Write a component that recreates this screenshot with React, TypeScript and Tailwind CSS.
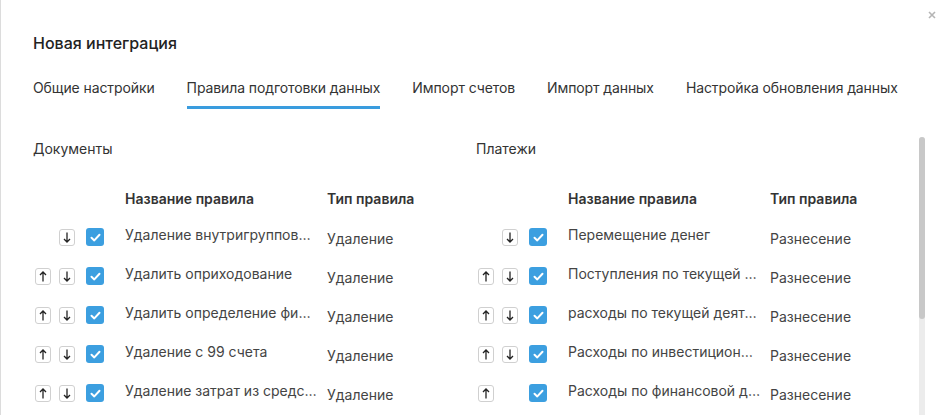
import React from "react";

type Rule = { name: string; type: string; up: boolean; down: boolean };

const DOC_RULES: Rule[] = [
  { name: "Удаление внутригрупповых документов", type: "Удаление", up: false, down: true },
  { name: "Удалить оприходование", type: "Удаление", up: true, down: true },
  { name: "Удалить определение финансового результата", type: "Удаление", up: true, down: true },
  { name: "Удаление с 99 счета", type: "Удаление", up: true, down: true },
  { name: "Удаление затрат из средств", type: "Удаление", up: true, down: true },
];

const PAY_RULES: Rule[] = [
  { name: "Перемещение денег", type: "Разнесение", up: false, down: true },
  { name: "Поступления по текущей деятельности", type: "Разнесение", up: true, down: true },
  { name: "расходы по текущей деятельности", type: "Разнесение", up: true, down: true },
  { name: "Расходы по инвестиционной деятельности", type: "Разнесение", up: true, down: true },
  { name: "Расходы по финансовой деятельности", type: "Разнесение", up: true, down: false },
];

const TABS = [
  "Общие настройки",
  "Правила подготовки данных",
  "Импорт счетов",
  "Импорт данных",
  "Настройка обновления данных",
];

const ArrowBtn = ({ dir }: { dir: "up" | "down" }) => (
  <div className="w-[16px] h-[17px] rounded-[3px] border border-[#d0d0d0] flex items-center justify-center">
    <svg width="8" height="11" viewBox="0 0 8 11" fill="none" stroke="#222" strokeWidth="1.3">
      {dir === "up" ? (
        <path d="M4 10.5V1M1 4l3-3 3 3" />
      ) : (
        <path d="M4 0.5V10M1 7l3 3 3-3" />
      )}
    </svg>
  </div>
);

const Check = () => (
  <div className="w-[18px] h-[18px] rounded-[3px] bg-[#3c9fe0] flex items-center justify-center">
    <svg width="11" height="9" viewBox="0 0 11 9" fill="none" stroke="#fff" strokeWidth="2" strokeLinecap="round" strokeLinejoin="round">
      <path d="M1.5 4.8l2.8 2.6L9.5 1.8" />
    </svg>
  </div>
);

const RuleTable = ({ title, rules }: { title: string; rules: Rule[] }) => (
  <div className="w-[443px] shrink-0">
    <div className="text-[14px] text-[#333] leading-[18px]">{title}</div>
    <div className="flex mt-[32px] text-[14px] font-semibold text-[#333] leading-[18px]">
      <div className="w-[92px]" />
      <div className="w-[202px]">Название правила</div>
      <div>Тип правила</div>
    </div>
    <div className="mt-[20px] flex flex-col gap-[21px]">
      {rules.map((r, i) => (
        <div key={i} className="flex items-center h-[18px]">
          <div className="w-[26px] pl-[2px]">{r.up && <ArrowBtn dir="up" />}</div>
          <div className="w-[27px]">{r.down && <ArrowBtn dir="down" />}</div>
          <div className="w-[39px]">
            <Check />
          </div>
          <div className="w-[202px] pr-[10px]">
            <div className="truncate text-[14px] text-[#444] leading-[18px] -mt-[4px]">{r.name}</div>
          </div>
          <div className="text-[14px] text-[#444] leading-[18px] mt-[3px]">{r.type}</div>
        </div>
      ))}
    </div>
  </div>
);

export default function App() {
  return (
    <div
      className="w-[948px] h-[415px] bg-white border-l border-[#dcdcdc] overflow-hidden relative"
      style={{ fontFamily: "Inter, 'Noto Sans', sans-serif" }}
    >
      <button className="absolute right-[12px] top-[11px] text-[#b5b5b5]">
        <svg width="8" height="8" viewBox="0 0 8 8" stroke="currentColor" strokeWidth="1.6">
          <path d="M1 1l6 6M7 1L1 7" />
        </svg>
      </button>
      <div className="pl-[32px] pt-[33px] text-[16px] font-medium text-[#222] leading-[20px]">
        Новая интеграция
      </div>
      <div className="flex gap-[32px] pl-[32px] mt-[26px]">
        {TABS.map((t, i) => (
          <div key={t} className="flex flex-col">
            <div className="text-[14px] text-[#333] leading-[18px] tracking-[-0.1px]">{t}</div>
            <div className={`mt-[9px] h-[3px] ${i === 1 ? "bg-[#3a9cde]" : ""}`} />
          </div>
        ))}
      </div>
      <div className="flex mt-[28px]">
        <div className="flex flex-1 pl-[32px] pt-[3px]">
          <RuleTable title="Документы" rules={DOC_RULES} />
          <RuleTable title="Платежи" rules={PAY_RULES} />
        </div>
        <div className="w-[7px] mr-[23px] bg-[#ececec] rounded-t-[3px] h-[300px]">
          <div className="h-[182px] bg-[#c8c8c8] rounded-[3px]" />
        </div>
      </div>
    </div>
  );
}
